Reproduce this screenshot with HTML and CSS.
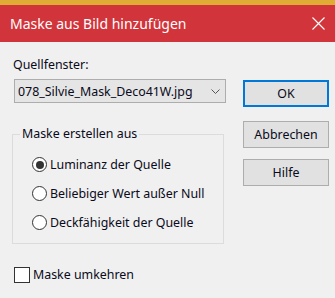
FILE: index.html
```html
<!DOCTYPE html>
<html lang="de">
<head>
<meta charset="utf-8">
<link rel="stylesheet" href="styles.css">
</head>
<body>
<div class="strip"></div>
<div class="titlebar">
  <span class="title">Maske aus Bild hinzufügen</span>
  <svg class="close" width="13" height="13" viewBox="0 0 13 13"><path d="M0.5 0.5 L12.5 12.5 M12.5 0.5 L0.5 12.5" stroke="#fff" stroke-width="1.1" fill="none"/></svg>
</div>
<div class="content">
  <div class="left">
    <div class="label">Quellfenster:</div>
    <div class="combo">
      <span>078_Silvie_Mask_Deco41W.jpg</span>
      <svg class="chev" width="9" height="5" viewBox="0 0 9 5"><path d="M0.5 0.5 L4.5 4.5 L8.5 0.5" stroke="#555" stroke-width="1" fill="none"/></svg>
    </div>
    <fieldset class="group">
      <legend>Maske erstellen aus</legend>
      <div class="radio"><span class="dot on"></span><span>Luminanz der Quelle</span></div>
      <div class="radio"><span class="dot"></span><span>Beliebiger Wert außer Null</span></div>
      <div class="radio"><span class="dot"></span><span>Deckfähigkeit der Quelle</span></div>
    </fieldset>
    <div class="check"><span class="box"></span><span>Maske umkehren</span></div>
  </div>
  <div class="right">
    <div class="btn ok">OK</div>
    <div class="btn b2">Abbrechen</div>
    <div class="btn b3">Hilfe</div>
  </div>
</div>
</body>
</html>
```
FILE: styles.css
```css
html, body { margin: 0; padding: 0; }
body {
  width: 335px;
  height: 298px;
  background: #f0f0f0;
  font-family: "Segoe UI", "Noto Sans", "Open Sans", sans-serif;
  font-size: 12.4px;
  color: #0a0a1a;
  overflow: hidden;
}
.strip { height: 5px; background: #dfad33; }
.titlebar {
  height: 37px;
  background: #d1343a;
  display: flex;
  align-items: center;
  justify-content: space-between;
  padding: 0 9px 0 10px;
}
.title { color: #fff; font-size: 14px; }
.close { display: block; margin-right: 1px; }
.content { display: flex; }
.left { width: 214px; padding-left: 12px; padding-top: 15px; }
.label { line-height: 16px; padding-left: 1px; }
.combo {
  margin: 6px 0 0 2px;
  height: 22px;
  border: 1px solid #adadad;
  background: #e5e5e5;
  display: flex;
  align-items: center;
  justify-content: space-between;
  padding-left: 3px;
  box-sizing: content-box;
  width: 207px;
}
.chev { margin-right: 5px; }
.group {
  margin: 23px 0 0 0;
  padding: 8px 0 0 19px;
  border: 1px solid #dcdcdc;
  width: 191px;
  height: 108px;
  box-sizing: content-box;
}
.group legend { padding: 0 2px; margin-left: -12px; line-height: 16px; }
.radio { display: flex; align-items: center; height: 29px; }
.dot {
  width: 13px; height: 13px;
  border: 1.5px solid #333;
  border-radius: 50%;
  background: #fff;
  margin-right: 3px;
  position: relative;
  flex: none;
}
.dot.on::after {
  content: "";
  position: absolute;
  left: 2.5px; top: 2.5px;
  width: 8px; height: 8px;
  border-radius: 50%;
  background: #333;
}
.check { display: flex; align-items: center; margin-top: 22px; margin-left: 2px; }
.box {
  width: 14px; height: 14px;
  border: 1px solid #333;
  background: #fff;
  margin-right: 3px;
}
.right { margin-left: 17px; padding-top: 38px; display: flex; flex-direction: column; }
.btn {
  width: 84px;
  height: 25px;
  border: 1px solid #adadad;
  background: #e1e1e1;
  display: flex;
  align-items: center;
  justify-content: center;
}
.btn.ok { border: 2px solid #0078d7; width: 82px; height: 23px; }
.b2 { margin-top: 14px; }
.b3 { margin-top: 11px; }
```
